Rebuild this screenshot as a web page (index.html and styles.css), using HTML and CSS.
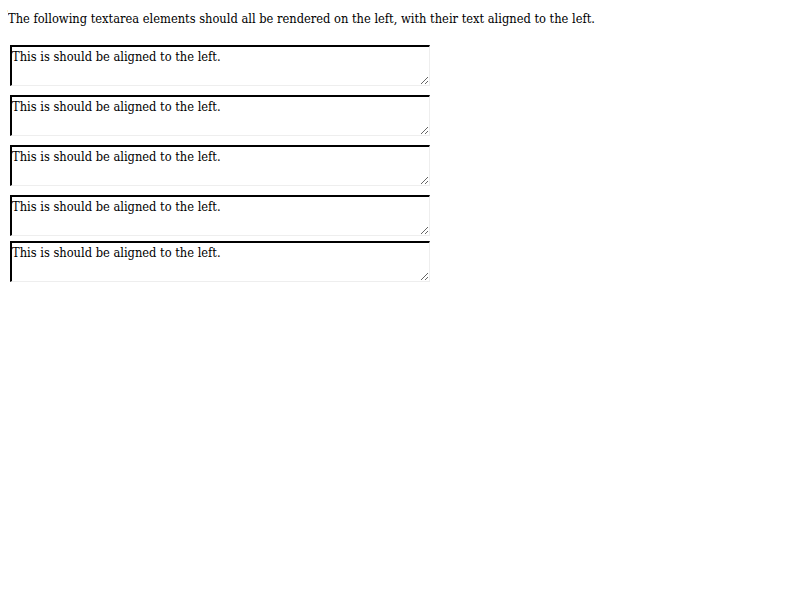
FILE: index.html
```html
<!DOCTYPE html>
<html>
<head>
<meta charset="utf-8">
<link rel="stylesheet" href="styles.css">
</head>
<body>
<p class="intro">The following textarea elements should all be rendered on the left, with their text aligned to the left.</p>
<div class="list">
<textarea class="box">This is should be aligned to the left.</textarea>
<textarea class="box">This is should be aligned to the left.</textarea>
<textarea class="box">This is should be aligned to the left.</textarea>
<textarea class="box">This is should be aligned to the left.</textarea>
<textarea class="box box-last">This is should be aligned to the left.</textarea>
</div>
</body>
</html>
```
FILE: styles.css
```css
html, body {
  background: #fff;
}
body {
  margin: 8px;
  font-family: "DejaVu Serif", serif;
  font-stretch: condensed;
  font-size: 12.75px;
  color: #000;
}
.intro {
  margin: 3px 0 19px 0;
  line-height: 15px;
}
.list {
  display: flex;
  flex-direction: column;
  align-items: flex-start;
  gap: 9px;
  padding-left: 2px;
}
.box {
  box-sizing: border-box;
  width: 420px;
  height: 41px;
  margin: 0;
  padding: 2px 0 0 0;
  font-family: "DejaVu Serif", serif;
  font-stretch: condensed;
  font-size: 12.75px;
  line-height: 15px;
  color: #000;
  background: #fff;
  border-style: solid;
  border-width: 2px 1px 1px 2px;
  border-top-color: #000;
  border-left-color: #000;
  border-right-color: #eeeeee;
  border-bottom-color: #eeeeee;
  text-align: left;
  resize: both;
  overflow: hidden;
  outline: none;
}
.box-last {
  margin-top: -4px;
}
```
